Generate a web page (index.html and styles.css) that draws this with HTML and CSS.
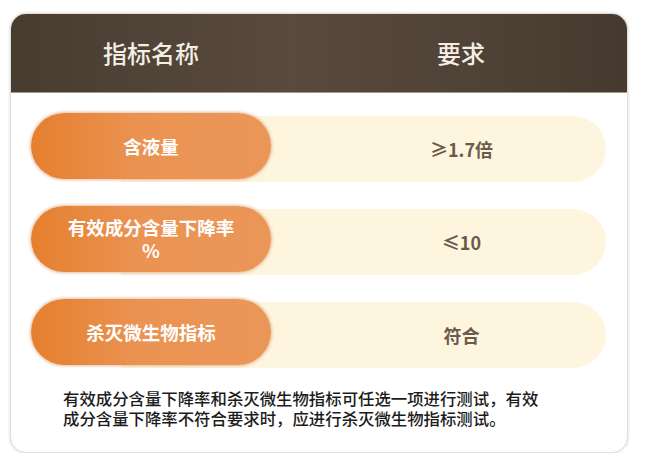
FILE: index.html
```html
<!DOCTYPE html>
<html lang="zh-CN">
<head>
<meta charset="utf-8">
<link rel="stylesheet" href="styles.css">
</head>
<body>
<div class="card">
  <div class="head">
    <div class="head-name">指标名称</div>
    <div class="head-req">要求</div>
  </div>
  <div class="rows">
    <div class="row">
      <div class="pill">含液量</div>
      <div class="val">≥1.7倍</div>
    </div>
    <div class="row">
      <div class="pill">有效成分含量下降率%</div>
      <div class="val">≤10</div>
    </div>
    <div class="row">
      <div class="pill">杀灭微生物指标</div>
      <div class="val">符合</div>
    </div>
  </div>
  <p class="note">有效成分含量下降率和杀灭微生物指标可任选一项进行测试，有效成分含量下降率不符合要求时，应进行杀灭微生物指标测试。</p>
</div>
</body>
</html>
```
FILE: styles.css
```css
* { box-sizing: border-box; }
html, body { margin: 0; padding: 0; background: #fff; }
body {
  font-family: "Noto Sans CJK SC", "Noto Sans", sans-serif;
  padding: 13px 0 0 10px;
}
.card {
  width: 618px;
  height: 440px;
  background: #fff;
  border-radius: 16px;
  border: 1px solid #e3dfd8;
  box-shadow: 0 0 3px rgba(0,0,0,0.18);
  overflow: hidden;
}
.head {
  height: 79px;
  display: grid;
  grid-template-columns: 240px 1fr;
  padding: 0 22px 0 20px;
  align-items: center;
  background: linear-gradient(to right, #483c31 0%, #584a3d 45%, #4f4236 75%, #463a30 100%);
  border-bottom: 1px solid #a8997e;
  color: #f4eee5;
  font-size: 24px;
  font-weight: 500;
}
.head-name { text-align: center; padding-bottom: 2px; }
.head-req { text-align: center; padding-left: 46px; padding-bottom: 2px; }
.rows {
  display: flex;
  flex-direction: column;
  gap: 27px;
  padding: 23px 21px 0 20px;
}
.row {
  height: 66px;
  display: flex;
  align-items: stretch;
  border-radius: 0 33px 33px 0;
  background: linear-gradient(to right, transparent 90px, #fef5df 90px);
}
.pill {
  width: 240px;
  height: 66px;
  margin: -3px 0 3px;
  border-radius: 33px;
  background: linear-gradient(to right, #e57f2e 0%, #ea9352 45%, #eb9659 100%);
  box-shadow: 0 0 3px 1px rgba(200,110,50,0.45);
  color: #fff;
  font-size: 18.5px;
  font-weight: 700;
  line-height: 23px;
  display: flex;
  align-items: center;
  justify-content: center;
  text-align: center;
  padding: 0 32px;
  line-break: anywhere;
}
.val {
  flex: 1;
  display: flex;
  align-items: center;
  justify-content: center;
  padding-left: 46px;
  color: #6a5a4c;
  font-size: 18px;
  font-weight: 700;
}
.note {
  margin: 20px 0 0 52px;
  width: 486px;
  font-size: 16.4px;
  line-height: 20px;
  font-weight: 500;
  color: #1c1c1c;
}
```
